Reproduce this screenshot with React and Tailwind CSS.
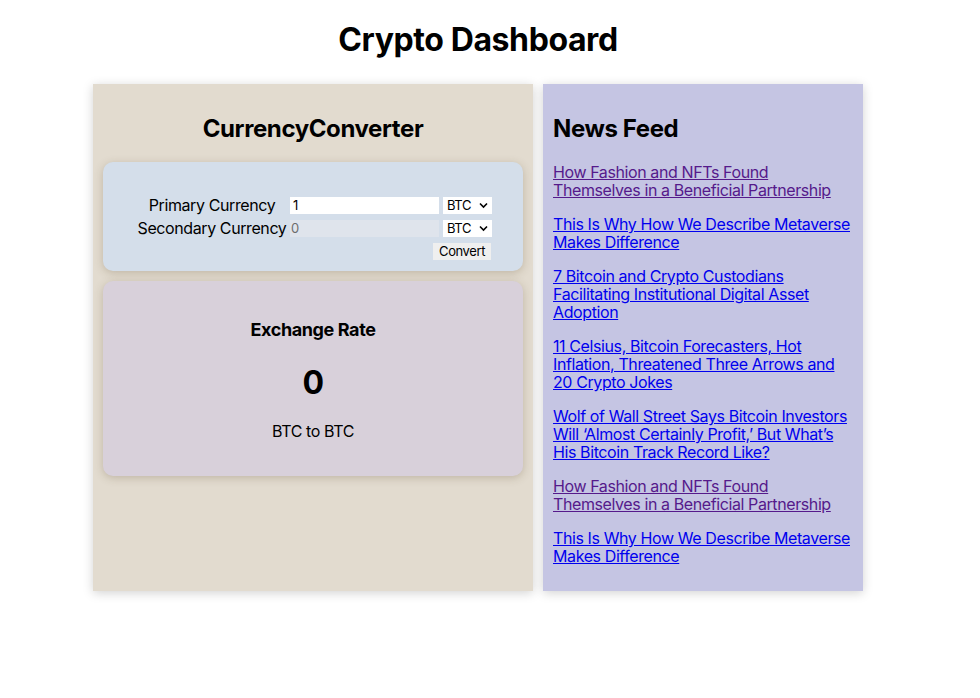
import React, { useState } from 'react';

const news = [
  { lines: ['How Fashion and NFTs Found', 'Themselves in a Beneficial Partnership'], visited: true },
  { lines: ['This Is Why How We Describe Metaverse', 'Makes Difference'] },
  { lines: ['7 Bitcoin and Crypto Custodians', 'Facilitating Institutional Digital Asset', 'Adoption'] },
  { lines: ['11 Celsius, Bitcoin Forecasters, Hot', 'Inflation, Threatened Three Arrows and', '20 Crypto Jokes'] },
  { lines: ['Wolf of Wall Street Says Bitcoin Investors', 'Will \u2018Almost Certainly Profit,\u2019 But What\u2019s', 'His Bitcoin Track Record Like?'] },
  { lines: ['How Fashion and NFTs Found', 'Themselves in a Beneficial Partnership'], visited: true },
  { lines: ['This Is Why How We Describe Metaverse', 'Makes Difference'] },
];

const CurrencySelect = () => (
  <div className="relative w-[49px] h-[17px] bg-white">
    <select className="appearance-none block w-full h-[17px] bg-transparent text-[13px] leading-[17px] py-0 pl-[4px] outline-none">
      <option>BTC</option>
      <option>ETH</option>
      <option>USD</option>
    </select>
    <svg className="absolute right-[4px] top-[5px] pointer-events-none" width="9" height="7" viewBox="0 0 9 7">
      <path d="M1 1.5 L4.5 5 L8 1.5" fill="none" stroke="#000" strokeWidth="1.6" />
    </svg>
  </div>
);

const CurrencyConverter = () => {
  const [amount, setAmount] = useState('1');

  return (
    <div className="w-[440px] bg-[#e2dbcf] p-[10px] shadow-[0_2px_10px_rgba(0,0,0,0.18)]">
      <h2 className="text-[24px] font-bold text-center leading-[28px] mt-[21px] mb-[19px]">CurrencyConverter</h2>

      <div className="bg-[#d4deea] rounded-[10px] shadow-[0_2px_8px_rgba(90,70,40,0.25)] pt-[35px] pb-[11px] flex justify-center">
        <div className="grid grid-cols-[152px_149px_49px] gap-x-[2px] gap-y-[6px] items-center">
          <span className="text-[16px] leading-[17px] text-center whitespace-nowrap">Primary Currency</span>
          <input
            value={amount}
            onChange={(e) => setAmount(e.target.value)}
            className="h-[17px] bg-white text-[13px] px-[3px] outline-none"
          />
          <div className="pl-[2px]"><CurrencySelect /></div>

          <span className="text-[16px] leading-[17px] text-center whitespace-nowrap">Secondary Currency</span>
          <input
            disabled
            value="0"
            className="h-[17px] bg-[#dfe4ec] text-[13px] px-[1px] text-[#6d6d6d] outline-none"
          />
          <div className="pl-[2px]"><CurrencySelect /></div>

          <div className="col-span-3 flex justify-end -mr-[1px]">
            <button className="bg-[#efefef] text-[13px] leading-[17px] px-[6px] h-[17px]">Convert</button>
          </div>
        </div>
      </div>

      <div className="mt-[10px] h-[195px] bg-[#d8d0da] rounded-[10px] shadow-[0_2px_8px_rgba(90,70,40,0.25)] pt-[38px] text-center">
        <h3 className="text-[18px] font-bold leading-[22px]">Exchange Rate</h3>
        <h1 className="text-[32px] font-bold leading-[38px] mt-[23px]">0</h1>
        <p className="text-[16px] leading-[19px] mt-[20px]">BTC to BTC</p>
      </div>
    </div>
  );
};

const NewsFeed = () => (
  <div className="w-[320px] bg-[#c5c5e3] p-[10px] shadow-[0_2px_10px_rgba(0,0,0,0.18)]">
    <h2 className="text-[24px] font-bold leading-[28px] mt-[21px] mb-[20px]">News Feed</h2>
    {news.map((item, i) => (
      <p key={i} className="mb-[16px] text-[16px] leading-[18px]">
        <a
          href="#"
          className={`underline whitespace-nowrap ${item.visited ? 'text-[#551a8b]' : 'text-[#0000ee]'}`}
        >
          {item.lines.map((line, j) => (
            <React.Fragment key={j}>
              {line}
              {j < item.lines.length - 1 && <br />}
            </React.Fragment>
          ))}
        </a>
      </p>
    ))}
  </div>
);

export default function App() {
  return (
    <div className="w-[956px] min-h-[698px] bg-white text-black tracking-[-0.025em] font-['Inter','Liberation_Sans',sans-serif]">
      <h1 className="text-[32px] font-bold text-center leading-[38px] pt-[21px] mb-[25px]">Crypto Dashboard</h1>
      <div className="flex justify-center gap-[10px]">
        <CurrencyConverter />
        <NewsFeed />
      </div>
    </div>
  );
}
